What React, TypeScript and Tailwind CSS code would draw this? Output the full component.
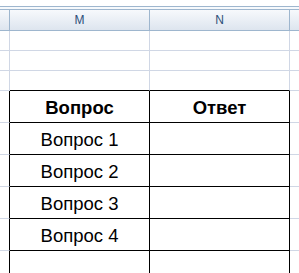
const grid = "border-[#d0d7e5]"
const hdr = "border-[#9eb6ce]"

const questions = ["Вопрос 1", "Вопрос 2", "Вопрос 3", "Вопрос 4", ""]

function GridRow({ last }: { last?: boolean }) {
  // plain empty sheet row above the table
  const b = last ? "border-b-black" : "border-b-[#d0d7e5]"
  return (
    <div className="flex h-[20px]">
      <div className={`w-[10px] shrink-0 border-r border-b ${grid}`} />
      <div className={`w-[140px] shrink-0 border-r border-b border-r-[#d0d7e5] ${b}`} />
      <div className={`w-[140px] shrink-0 border-r border-b border-r-[#d0d7e5] ${b}`} />
      <div className={`flex-1 border-b ${grid}`} />
    </div>
  )
}

function TableRow({ left, right, bold }: { left: string; right: string; bold?: boolean }) {
  const txt = bold ? "font-bold" : "font-normal"
  return (
    <div className="flex h-[32px]">
      <div className="w-[10px] shrink-0 border-r border-r-black border-b border-b-[#d0d7e5]" />
      <div className={`w-[140px] shrink-0 border-r border-b border-black flex items-center justify-center pt-[2px] text-[18.5px] text-black ${txt}`}>
        {left}
      </div>
      <div className={`w-[140px] shrink-0 border-r border-b border-black flex items-center justify-center pt-[2px] text-[18.5px] text-black ${txt}`}>
        {right}
      </div>
      <div className={`flex-1 border-b ${grid}`} />
    </div>
  )
}

export default function App() {
  return (
    <div className="w-[299px] h-[273px] overflow-hidden bg-white font-['Liberation_Sans',Arial,sans-serif]">
      {/* formula bar edge */}
      <div className="h-[6px] bg-white" />
      <div className={`h-[4px] border-t border-b ${hdr} bg-[#f6f9fc]`} />
      {/* column headers */}
      <div className="flex h-[21px] bg-gradient-to-b from-[#f7f9fc] to-[#dce4ee]">
        <div className={`w-[10px] shrink-0 border-r border-b ${hdr}`} />
        <div className={`w-[140px] shrink-0 border-r border-b ${hdr} flex items-center justify-center text-[12px] text-[#2c4f78]`}>M</div>
        <div className={`w-[140px] shrink-0 border-r border-b ${hdr} flex items-center justify-center text-[12px] text-[#2c4f78]`}>N</div>
        <div className={`flex-1 border-b ${hdr}`} />
      </div>
      <GridRow />
      <GridRow />
      <GridRow last />
      <TableRow left="Вопрос" right="Ответ" bold />
      {questions.map((q, i) => (
        <TableRow key={i} left={q} right="" />
      ))}
    </div>
  )
}
